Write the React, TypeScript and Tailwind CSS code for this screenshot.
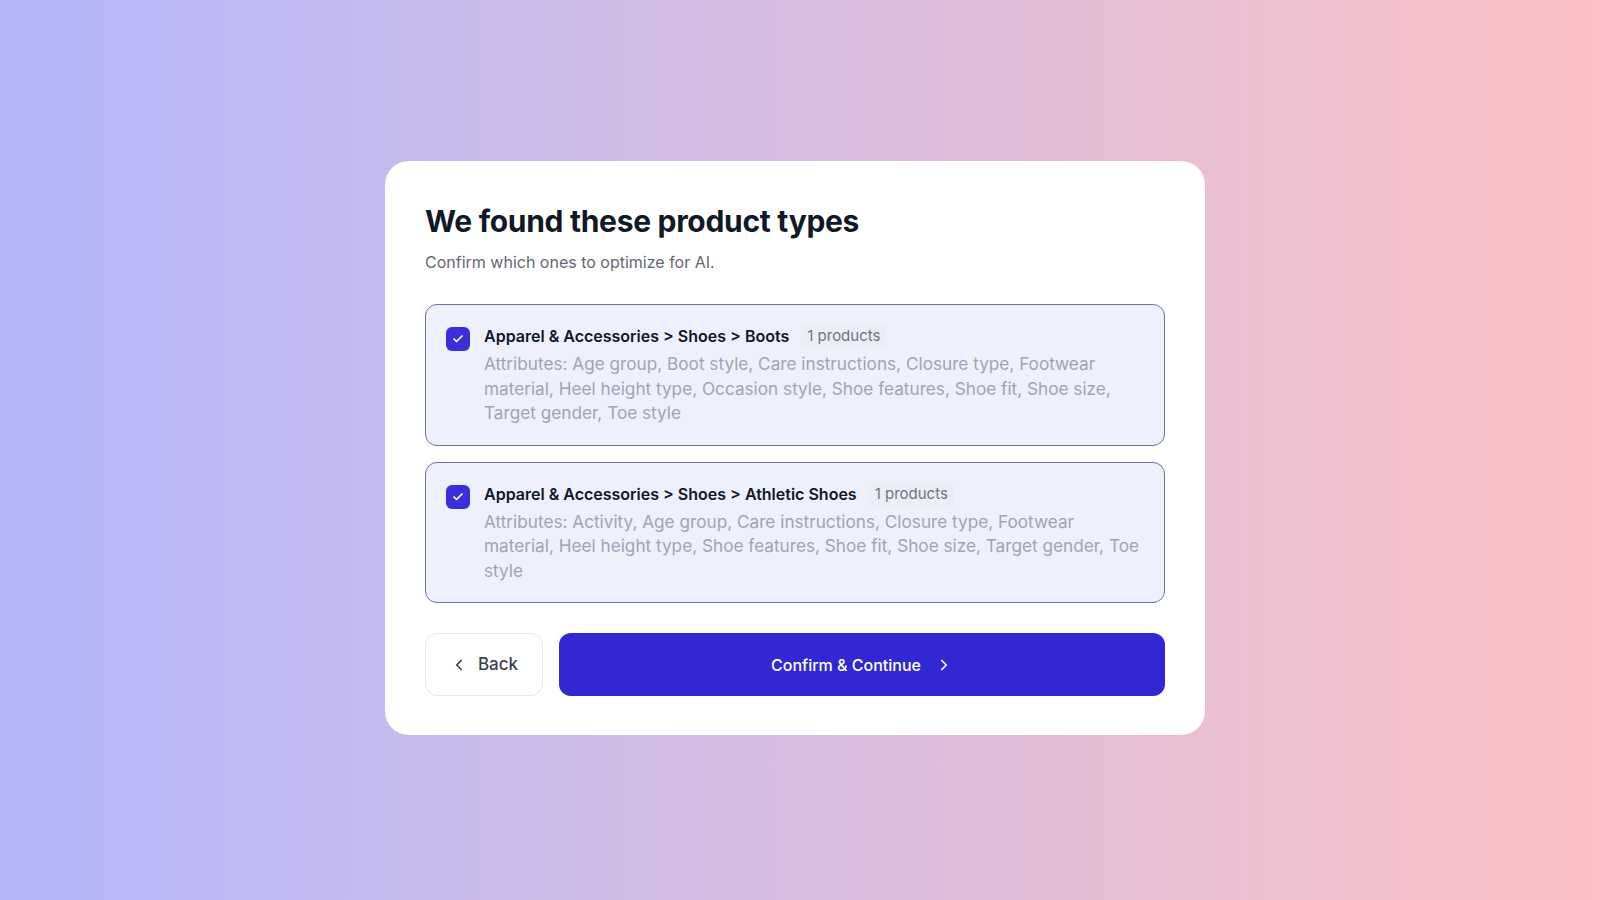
import React, { useState } from 'react';
import { Check, ChevronLeft, ChevronRight } from 'lucide-react';

type ProductType = {
  id: string;
  path: string;
  count: number;
  attributes: string[];
};

const productTypes: ProductType[] = [
  {
    id: 'boots',
    path: 'Apparel & Accessories > Shoes > Boots',
    count: 1,
    attributes: [
      'Age group',
      'Boot style',
      'Care instructions',
      'Closure type',
      'Footwear material',
      'Heel height type',
      'Occasion style',
      'Shoe features',
      'Shoe fit',
      'Shoe size',
      'Target gender',
      'Toe style',
    ],
  },
  {
    id: 'athletic',
    path: 'Apparel & Accessories > Shoes > Athletic Shoes',
    count: 1,
    attributes: [
      'Activity',
      'Age group',
      'Care instructions',
      'Closure type',
      'Footwear material',
      'Heel height type',
      'Shoe features',
      'Shoe fit',
      'Shoe size',
      'Target gender',
      'Toe style',
    ],
  },
];

const ProductTypeRow = ({
  item,
  checked,
  onToggle,
}: {
  item: ProductType;
  checked: boolean;
  onToggle: () => void;
}) => (
  <div
    onClick={onToggle}
    className={`flex cursor-pointer items-start gap-3.5 rounded-xl border-[1.5px] px-5 py-[19px] ${
      checked ? 'border-[#6c6eae] bg-[#eef0fc]' : 'border-gray-200 bg-white'
    }`}
  >
    <span
      className={`mt-[3px] flex h-6 w-6 shrink-0 items-center justify-center rounded-md ${
        checked ? 'bg-[#3a2fd8]' : 'border border-gray-300 bg-white'
      }`}
    >
      {checked && <Check className="h-3 w-3 text-white" strokeWidth={3.5} />}
    </span>
    <div className="min-w-0 flex-1">
      <div className="flex items-center gap-3">
        <span className="text-base font-semibold leading-6 text-[#111827]">{item.path}</span>
        <span className="rounded-md bg-[#eceef6] px-1.5 text-[15px] leading-6 text-[#6f7382]">
          {item.count} products
        </span>
      </div>
      <p className="mt-1 text-[17.2px] leading-[24.5px] text-[#a1a3b5]">
        Attributes: {item.attributes.join(', ')}
      </p>
    </div>
  </div>
);

export default function App() {
  const [selected, setSelected] = useState<Record<string, boolean>>({
    boots: true,
    athletic: true,
  });

  const toggle = (id: string) => setSelected((s) => ({ ...s, [id]: !s[id] }));

  return (
    <div
      className="flex min-h-screen items-center justify-center bg-gradient-to-r from-[#b3b7fb] to-[#fcc1c4]"
      style={{ fontFamily: 'Inter, "Noto Sans", sans-serif' }}
    >
      <div className="-ml-2.5 -mt-1 w-[820px] rounded-3xl bg-white px-10 pb-[39px] pt-[42px]">
        <h1 className="text-[30px] font-bold leading-9 tracking-[-0.01em] text-[#111827]">
          We found these product types
        </h1>
        <p className="mt-[11px] text-base text-[#646873]">Confirm which ones to optimize for AI.</p>

        <div className="mt-[30px] space-y-4">
          {productTypes.map((item) => (
            <ProductTypeRow
              key={item.id}
              item={item}
              checked={!!selected[item.id]}
              onToggle={() => toggle(item.id)}
            />
          ))}
        </div>

        <div className="mt-[30px] flex gap-4">
          <button
            type="button"
            className="flex h-[63px] w-[118px] items-center justify-center gap-2.5 rounded-xl border border-gray-200 bg-white text-[17px] font-medium text-[#374151]"
          >
            <ChevronLeft className="h-[18px] w-[18px]" strokeWidth={2.25} />
            Back
          </button>
          <button
            type="button"
            className="flex h-[63px] flex-1 items-center justify-center gap-3.5 rounded-xl bg-[#3128d4] text-base font-medium text-white"
          >
            Confirm &amp; Continue
            <ChevronRight className="h-[18px] w-[18px]" strokeWidth={2.25} />
          </button>
        </div>
      </div>
    </div>
  );
}
